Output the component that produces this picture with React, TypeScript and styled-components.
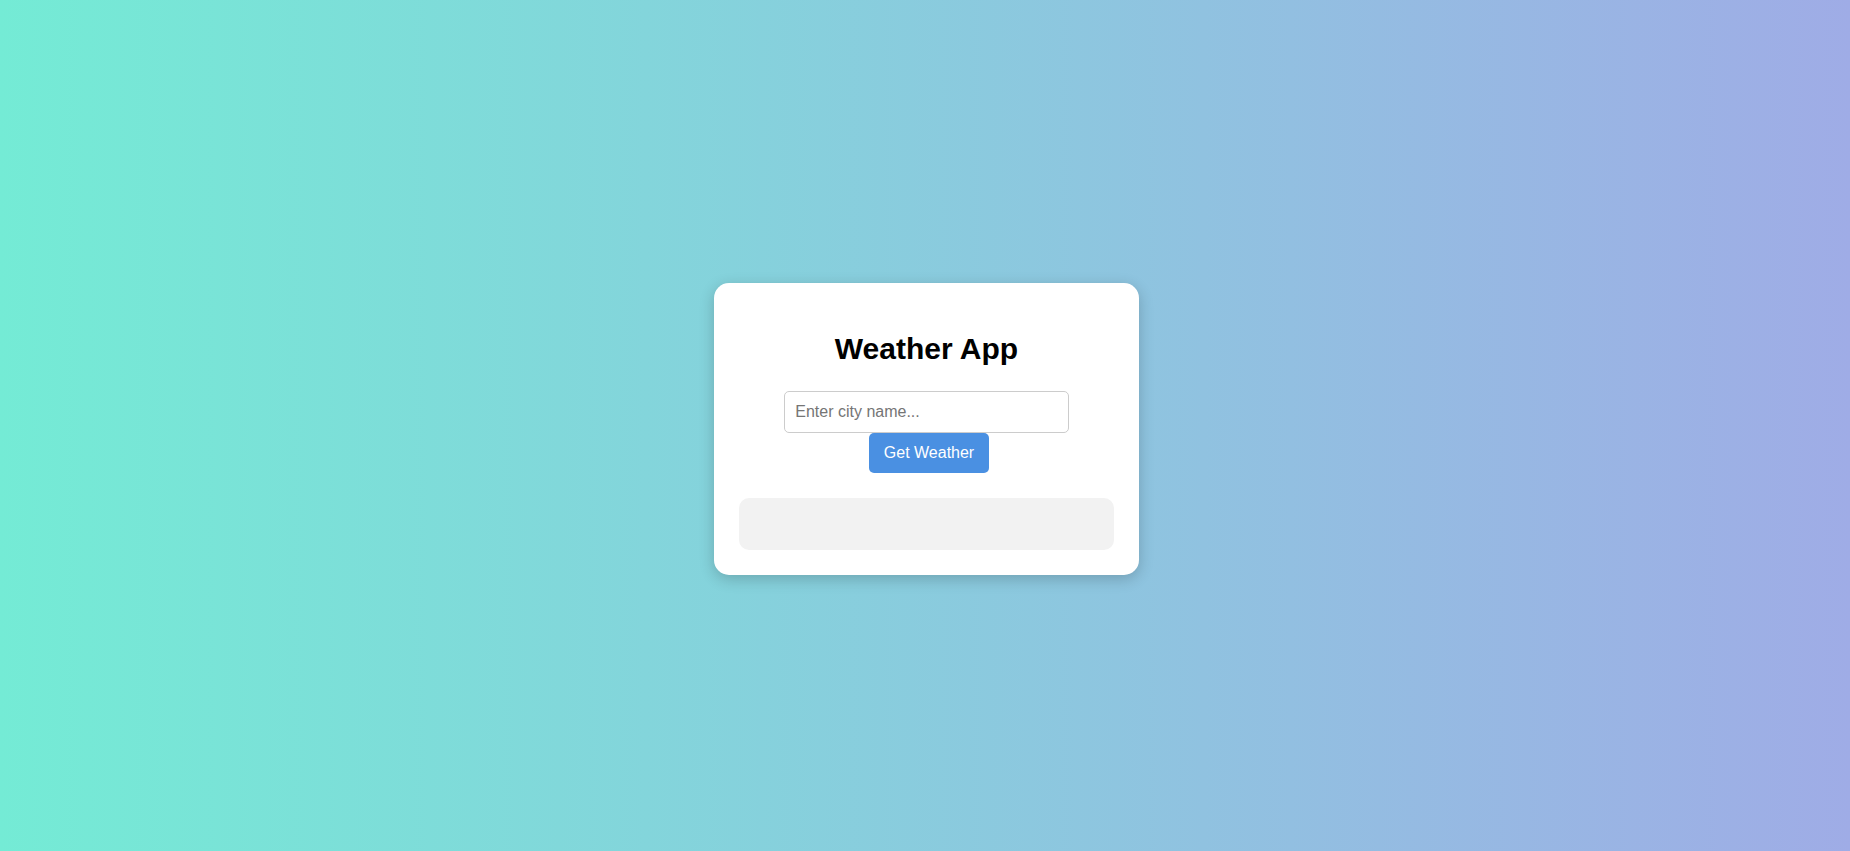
import styled, { createGlobalStyle } from "styled-components";

const GlobalStyle = createGlobalStyle`
  html, body {
    margin: 0;
    padding: 0;
  }
  body {
    font-family: "Liberation Sans", Arial, sans-serif;
    background: linear-gradient(to right, #74ebd5, #9face6);
    min-height: 100vh;
  }
`;

const Page = styled.main`
  min-height: 100vh;
  display: flex;
  align-items: center;
  justify-content: center;
  padding: 6px 0 0 3px;
  box-sizing: border-box;
`;

const Card = styled.section`
  width: 375px;
  padding: 25px;
  background: #ffffff;
  border-radius: 15px;
  box-shadow: 0 4px 15px rgba(0, 0, 0, 0.2);
  text-align: center;
`;

const Title = styled.h1`
  margin: 24px 0 25px;
  font-size: 30px;
  font-weight: bold;
  color: #000;
`;

const SearchForm = styled.form`
  display: flex;
  flex-wrap: wrap;
  justify-content: center;
`;

const CityInput = styled.input`
  width: 70%;
  padding: 10px;
  font-family: "Liberation Sans", Arial, sans-serif;
  font-size: 16px;
  line-height: 20px;
  border: 1px solid #ccc;
  border-radius: 5px;
  outline: none;
  color: #333;

  &::placeholder {
    color: #757575;
  }
`;

const SubmitButton = styled.button`
  margin-left: 5px;
  padding: 10px 15px;
  font-family: "Liberation Sans", Arial, sans-serif;
  font-size: 16px;
  line-height: 20px;
  color: #fff;
  background: #4a90e2;
  border: none;
  border-radius: 5px;
  cursor: pointer;
`;

const Result = styled.div`
  margin-top: 25px;
  height: 52px;
  background: #f2f2f2;
  border-radius: 10px;
`;

export default function App() {
  return (
    <>
      <GlobalStyle />
      <Page>
        <Card>
          <Title>Weather App</Title>
          <SearchForm onSubmit={(e) => e.preventDefault()}>
            <CityInput type="text" placeholder="Enter city name..." />
            <SubmitButton type="submit">Get Weather</SubmitButton>
          </SearchForm>
          <Result />
        </Card>
      </Page>
    </>
  );
}
